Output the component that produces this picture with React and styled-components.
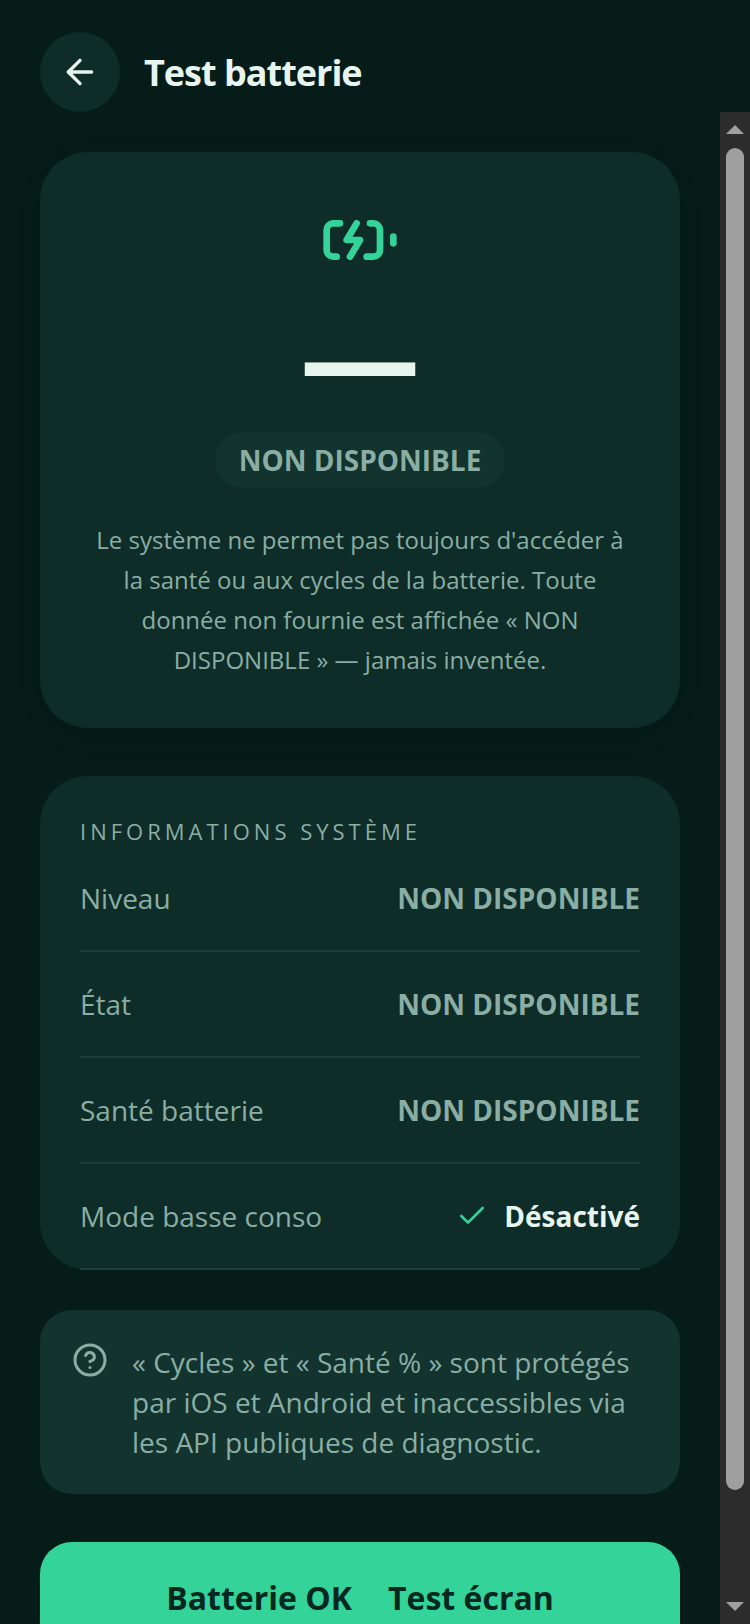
import React, { useEffect, useRef, useState } from 'react';
import styled, { createGlobalStyle } from 'styled-components';
import { ArrowLeft, Check, CircleHelp } from 'lucide-react';

const rows = [
    { label: 'Niveau' },
    { label: 'État' },
    { label: 'Santé batterie' },
    { label: 'Mode basse conso', value: 'Désactivé' },
];

const BatteryIcon = () => (
    <svg width="80" height="80" viewBox="0 0 24 24" fill="none" stroke="#34d399" strokeWidth="2" strokeLinecap="round" strokeLinejoin="round" aria-hidden="true">
        <path d="M15 7h1a2 2 0 0 1 2 2v6a2 2 0 0 1-2 2h-2" />
        <path d="M6 7H4a2 2 0 0 0-2 2v6a2 2 0 0 0 2 2h1" />
        <path d="m11 7-3 5h4l-3 5" />
        <path d="M22 11v2" />
    </svg>
);

const App = () => {
    const contentRef = useRef(null);
    const [thumb, setThumb] = useState({ top: 0, size: 100 });

    // percentages of the track
    const updateThumb = () => {
        const el = contentRef.current;
        setThumb({
            top: (el.scrollTop / el.scrollHeight) * 100,
            size: (el.clientHeight / el.scrollHeight) * 100,
        });
    };

    useEffect(() => {
        updateThumb();
        window.addEventListener('resize', updateThumb);
        return () => window.removeEventListener('resize', updateThumb);
    }, []);

    return (
        <Screen>
            <GlobalStyle />
            <Header>
                <BackButton type="button" aria-label="Retour"><ArrowLeft size={40} /></BackButton>
                <Title>Test batterie</Title>
            </Header>
            <Body>
                <Content ref={contentRef} onScroll={updateThumb}>
                    <LevelCard>
                        <BatteryIcon />
                        <Level>—</Level>
                        <Badge>NON DISPONIBLE</Badge>
                        <Description>
                            Le système ne permet pas toujours d'accéder à la santé ou aux cycles de la batterie. Toute donnée non fournie est affichée « NON DISPONIBLE » — jamais inventée.
                        </Description>
                    </LevelCard>
                    <InfoCard>
                        <SectionTitle>INFORMATIONS SYSTÈME</SectionTitle>
                        <InfoList>
                            {rows.map((row) => (
                                <InfoRow key={row.label}>
                                    <dt>{row.label}</dt>
                                    <Value $known={Boolean(row.value)}>
                                        {row.value && <Check size={32} color="#34d399" />}
                                        {row.value || 'NON DISPONIBLE'}
                                    </Value>
                                </InfoRow>
                            ))}
                        </InfoList>
                    </InfoCard>
                    <Note>
                        <CircleHelp size={36} />
                        <NoteText>« Cycles » et « Santé % » sont protégés par iOS et Android et inaccessibles via les API publiques de diagnostic.</NoteText>
                    </Note>
                    <NextButton type="button">
                        <span>Batterie OK</span>
                        <span>Test écran</span>
                    </NextButton>
                </Content>
                <Scrollbar aria-hidden="true">
                    <svg width="18" height="9" viewBox="0 0 18 9"><path d="M9 0 18 9H0z" fill="#9f9f9f" /></svg>
                    <Track>
                        <Thumb style={{ height: `${thumb.size}%`, top: `${thumb.top}%` }} />
                    </Track>
                    <svg width="18" height="9" viewBox="0 0 18 9"><path d="M0 0h18L9 9z" fill="#9f9f9f" /></svg>
                </Scrollbar>
            </Body>
        </Screen>
    )
}

export default App;

const GlobalStyle = createGlobalStyle`
    * {
        box-sizing: border-box;
    }

    body {
        margin: 0;
        background: #051c18;
        color: #e8f5ef;
        font-family: "Open Sans", "Noto Sans", sans-serif;
    }
`

const Screen = styled.div`
    display: flex;
    flex-direction: column;
    height: 100vh;
`

const Header = styled.header`
    display: flex;
    align-items: center;
    gap: 24px;
    padding: 32px 40px 0;
`

const BackButton = styled.button`
    display: flex;
    align-items: center;
    justify-content: center;
    width: 80px;
    height: 80px;
    padding: 0;
    border: none;
    border-radius: 50%;
    background: #0e2d28;
    color: #e8f5ef;
`

const Title = styled.h1`
    margin: 0;
    font-size: 36px;
    font-weight: 700;
    letter-spacing: -1px;
    line-height: 49px;
`

const Body = styled.div`
    display: flex;
    flex: 1;
    min-height: 0;
`

const Content = styled.main`
    display: flex;
    flex: 1;
    flex-direction: column;
    min-width: 0;
    padding: 40px 40px 80px;
    overflow-y: auto;
    scrollbar-width: none;

    > * {
        flex-shrink: 0;
    }
`

const Card = styled.section`
    border-radius: 48px;
    background: #0e2d28;
`

const LevelCard = styled(Card)`
    display: flex;
    flex-direction: column;
    align-items: center;
    padding: 48px;
    box-shadow: 0 8px 24px rgba(0, 0, 0, 0.1);
`

const Level = styled.div`
    margin-top: 16px;
    font-size: 120px;
    font-weight: 700;
    line-height: 120px;
`

const Badge = styled.div`
    margin-top: 16px;
    padding: 8px 24px;
    border-radius: 28px;
    background: #12332e;
    color: #8aaea4;
    font-size: 28px;
    font-weight: 700;
    line-height: 40px;
`

const Description = styled.p`
    margin: 32px 0 0;
    color: #8aaea4;
    font-size: 24px;
    line-height: 40px;
    text-align: center;
`

const InfoCard = styled(Card)`
    margin-top: 48px;
    padding: 40px 40px 0;
`

const SectionTitle = styled.h2`
    margin: 0;
    color: #8aaea4;
    font-size: 22px;
    font-weight: 400;
    letter-spacing: 4px;
    line-height: 30px;
`

const InfoList = styled.dl`
    margin: 0;
`

const InfoRow = styled.div`
    display: flex;
    align-items: center;
    justify-content: space-between;
    padding: 32px 0;
    border-bottom: 2px solid #1b403a;
    color: #8aaea4;
    font-size: 28px;
    line-height: 40px;
`

const Value = styled.dd`
    display: flex;
    align-items: center;
    gap: 16px;
    margin: 0;
    color: ${(props) => (props.$known ? '#e8f5ef' : '#8aaea4')};
    font-weight: 700;
`

const Note = styled.aside`
    display: flex;
    align-items: flex-start;
    gap: 24px;
    margin-top: 40px;
    padding: 32px;
    border-radius: 32px;
    background: #12332e;
    color: #8aaea4;

    svg {
        flex-shrink: 0;
    }
`

const NoteText = styled.p`
    margin: 0;
    font-size: 28px;
    line-height: 40px;
`

const NextButton = styled.button`
    display: flex;
    align-items: center;
    justify-content: center;
    gap: 36px;
    margin-top: 48px;
    padding: 32px;
    border: none;
    border-radius: 32px;
    background: #34d399;
    color: #04281f;
    font-family: inherit;
    font-size: 32px;
    font-weight: 700;
    line-height: 48px;
`

const Scrollbar = styled.div`
    display: flex;
    flex-direction: column;
    align-items: center;
    gap: 14px;
    width: 30px;
    padding: 13px 0;
    background: #2c2c2c;
`

const Track = styled.div`
    flex: 1;
    position: relative;
    width: 18px;
`

const Thumb = styled.div`
    position: absolute;
    width: 100%;
    border-radius: 9px;
    background: #9f9f9f;
`
